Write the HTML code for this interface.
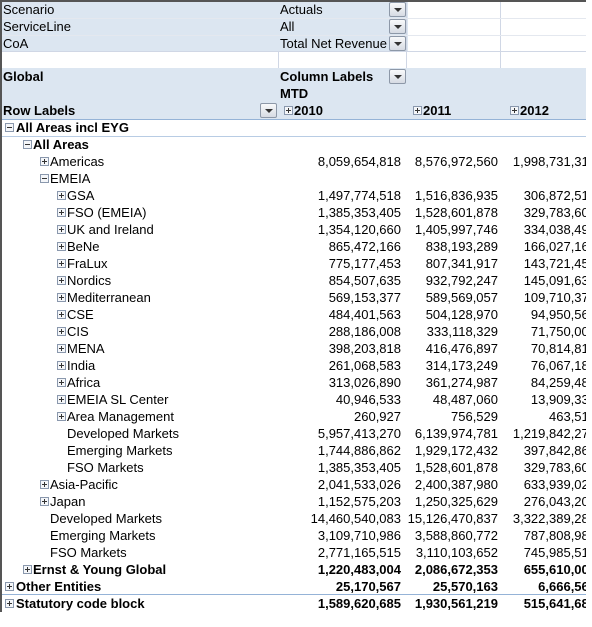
<!DOCTYPE html>
<html><head><meta charset="utf-8"><style>
*{margin:0;padding:0;box-sizing:border-box}
body{width:592px;height:627px;overflow:hidden;background:#fff;font-family:"Liberation Sans",Arial,sans-serif;font-size:13px;color:#000;position:relative}
.wrap{position:absolute;left:0;top:0;width:586px;height:612px;overflow:hidden;border-left:2px solid #555;border-top:2px solid #555}
.hd{position:absolute;left:0;width:100%;background:#dce6f1}
.r{position:absolute;left:0;width:100%;height:17px;line-height:17px;white-space:nowrap}
.t{position:absolute;top:0}
.n{position:absolute;top:0;text-align:right}
.b{font-weight:bold}
.bx{position:absolute;top:4px;width:9px;height:9px;border:1px solid #8a98ad;background:#f4f6f9}
.bx:before{content:"";position:absolute;left:1px;top:3px;width:5px;height:1px;background:#333}
.p:after{content:"";position:absolute;left:3px;top:1px;width:1px;height:5px;background:#333}
.dd{position:absolute;width:17px;height:15px;border:1px solid #8d98a8;background:linear-gradient(#f8f9fb,#d6dbe3);border-radius:2px}
.dd:after{content:"";position:absolute;left:4px;top:5px;border-left:4px solid transparent;border-right:4px solid transparent;border-top:4px solid #333}
.vl{position:absolute;width:1px;background:#d0d7e5}
.hl{position:absolute;left:0;width:100%;height:1px;background:#95b3d7}
</style></head><body>
<div class="wrap">
<div class="hd" style="top:0;height:49px;width:406px"></div>
<div class="hd" style="top:66px;height:51px"></div>
<div class="vl" style="left:404px;top:0;height:66px"></div>
<div class="vl" style="left:498px;top:0;height:66px"></div>
<div class="vl" style="left:276px;top:49px;height:17px"></div>
<div style="position:absolute;left:0;top:16px;width:100%;height:1px;background:#e4e8ef"></div>
<div style="position:absolute;left:0;top:33px;width:100%;height:1px;background:#e4e8ef"></div>
<div style="position:absolute;left:0;top:49px;width:100%;height:1px;background:#d0d7e5"></div>
<div class="r" style="top:-1px"><span class="t" style="left:1px">Scenario</span><span class="t" style="left:278px">Actuals</span></div>
<div class="r" style="top:16px"><span class="t" style="left:1px">ServiceLine</span><span class="t" style="left:278px">All</span></div>
<div class="r" style="top:33px"><span class="t" style="left:1px">CoA</span><span class="t" style="left:278px">Total Net Revenue</span></div>
<div class="dd" style="left:387px;top:0"></div>
<div class="dd" style="left:387px;top:17px"></div>
<div class="dd" style="left:387px;top:34px"></div>
<div class="r b" style="top:66px"><span class="t" style="left:1px">Global</span><span class="t" style="left:278px">Column Labels</span></div>
<div class="dd" style="left:387px;top:67px"></div>
<div class="r b" style="top:83px"><span class="t" style="left:278px">MTD</span></div>
<div class="r b" style="top:100px"><span class="t" style="left:1px">Row Labels</span>
<span class="bx p" style="left:282px"></span><span class="t" style="left:292px">2010</span>
<span class="bx p" style="left:411px"></span><span class="t" style="left:421px">2011</span>
<span class="bx p" style="left:508px"></span><span class="t" style="left:518px">2012</span></div>
<div class="dd" style="left:258px;top:101px"></div>
<div class="hl" style="top:117px"></div>
<div class="hl" style="top:134px;background:#b8cce4"></div>
<div class="hl" style="top:592px"></div>

<div class="r b" style="top:117px"><span class="bx" style="left:3px"></span><span class="t" style="left:14px">All Areas incl EYG</span></div>
<div class="r b" style="top:134px"><span class="bx" style="left:21px"></span><span class="t" style="left:31px">All Areas</span></div>
<div class="r" style="top:151px"><span class="bx p" style="left:38px"></span><span class="t" style="left:48px">Americas</span><span class="n" style="right:185px">8,059,654,818</span><span class="n" style="right:88px">8,576,972,560</span><span class="n" style="right:-10px">1,998,731,318</span></div>
<div class="r" style="top:168px"><span class="bx" style="left:38px"></span><span class="t" style="left:48px">EMEIA</span></div>
<div class="r" style="top:185px"><span class="bx p" style="left:55px"></span><span class="t" style="left:65px">GSA</span><span class="n" style="right:185px">1,497,774,518</span><span class="n" style="right:88px">1,516,836,935</span><span class="n" style="right:-10px">306,872,518</span></div>
<div class="r" style="top:202px"><span class="bx p" style="left:55px"></span><span class="t" style="left:65px">FSO (EMEIA)</span><span class="n" style="right:185px">1,385,353,405</span><span class="n" style="right:88px">1,528,601,878</span><span class="n" style="right:-10px">329,783,605</span></div>
<div class="r" style="top:219px"><span class="bx p" style="left:55px"></span><span class="t" style="left:65px">UK and Ireland</span><span class="n" style="right:185px">1,354,120,660</span><span class="n" style="right:88px">1,405,997,746</span><span class="n" style="right:-10px">334,038,498</span></div>
<div class="r" style="top:236px"><span class="bx p" style="left:55px"></span><span class="t" style="left:65px">BeNe</span><span class="n" style="right:185px">865,472,166</span><span class="n" style="right:88px">838,193,289</span><span class="n" style="right:-10px">166,027,166</span></div>
<div class="r" style="top:253px"><span class="bx p" style="left:55px"></span><span class="t" style="left:65px">FraLux</span><span class="n" style="right:185px">775,177,453</span><span class="n" style="right:88px">807,341,917</span><span class="n" style="right:-10px">143,721,453</span></div>
<div class="r" style="top:270px"><span class="bx p" style="left:55px"></span><span class="t" style="left:65px">Nordics</span><span class="n" style="right:185px">854,507,635</span><span class="n" style="right:88px">932,792,247</span><span class="n" style="right:-10px">145,091,635</span></div>
<div class="r" style="top:287px"><span class="bx p" style="left:55px"></span><span class="t" style="left:65px">Mediterranean</span><span class="n" style="right:185px">569,153,377</span><span class="n" style="right:88px">589,569,057</span><span class="n" style="right:-10px">109,710,377</span></div>
<div class="r" style="top:304px"><span class="bx p" style="left:55px"></span><span class="t" style="left:65px">CSE</span><span class="n" style="right:185px">484,401,563</span><span class="n" style="right:88px">504,128,970</span><span class="n" style="right:-10px">94,950,563</span></div>
<div class="r" style="top:321px"><span class="bx p" style="left:55px"></span><span class="t" style="left:65px">CIS</span><span class="n" style="right:185px">288,186,008</span><span class="n" style="right:88px">333,118,329</span><span class="n" style="right:-10px">71,750,008</span></div>
<div class="r" style="top:338px"><span class="bx p" style="left:55px"></span><span class="t" style="left:65px">MENA</span><span class="n" style="right:185px">398,203,818</span><span class="n" style="right:88px">416,476,897</span><span class="n" style="right:-10px">70,814,818</span></div>
<div class="r" style="top:355px"><span class="bx p" style="left:55px"></span><span class="t" style="left:65px">India</span><span class="n" style="right:185px">261,068,583</span><span class="n" style="right:88px">314,173,249</span><span class="n" style="right:-10px">76,067,183</span></div>
<div class="r" style="top:372px"><span class="bx p" style="left:55px"></span><span class="t" style="left:65px">Africa</span><span class="n" style="right:185px">313,026,890</span><span class="n" style="right:88px">361,274,987</span><span class="n" style="right:-10px">84,259,480</span></div>
<div class="r" style="top:389px"><span class="bx p" style="left:55px"></span><span class="t" style="left:65px">EMEIA SL Center</span><span class="n" style="right:185px">40,946,533</span><span class="n" style="right:88px">48,487,060</span><span class="n" style="right:-10px">13,909,333</span></div>
<div class="r" style="top:406px"><span class="bx p" style="left:55px"></span><span class="t" style="left:65px">Area Management</span><span class="n" style="right:185px">260,927</span><span class="n" style="right:88px">756,529</span><span class="n" style="right:-10px">463,512</span></div>
<div class="r" style="top:423px"><span class="t" style="left:65px">Developed Markets</span><span class="n" style="right:185px">5,957,413,270</span><span class="n" style="right:88px">6,139,974,781</span><span class="n" style="right:-10px">1,219,842,270</span></div>
<div class="r" style="top:440px"><span class="t" style="left:65px">Emerging Markets</span><span class="n" style="right:185px">1,744,886,862</span><span class="n" style="right:88px">1,929,172,432</span><span class="n" style="right:-10px">397,842,862</span></div>
<div class="r" style="top:457px"><span class="t" style="left:65px">FSO Markets</span><span class="n" style="right:185px">1,385,353,405</span><span class="n" style="right:88px">1,528,601,878</span><span class="n" style="right:-10px">329,783,605</span></div>
<div class="r" style="top:474px"><span class="bx p" style="left:38px"></span><span class="t" style="left:48px">Asia-Pacific</span><span class="n" style="right:185px">2,041,533,026</span><span class="n" style="right:88px">2,400,387,980</span><span class="n" style="right:-10px">633,939,026</span></div>
<div class="r" style="top:491px"><span class="bx p" style="left:38px"></span><span class="t" style="left:48px">Japan</span><span class="n" style="right:185px">1,152,575,203</span><span class="n" style="right:88px">1,250,325,629</span><span class="n" style="right:-10px">276,043,203</span></div>
<div class="r" style="top:508px"><span class="t" style="left:48px">Developed Markets</span><span class="n" style="right:185px">14,460,540,083</span><span class="n" style="right:88px">15,126,470,837</span><span class="n" style="right:-10px">3,322,389,283</span></div>
<div class="r" style="top:525px"><span class="t" style="left:48px">Emerging Markets</span><span class="n" style="right:185px">3,109,710,986</span><span class="n" style="right:88px">3,588,860,772</span><span class="n" style="right:-10px">787,808,986</span></div>
<div class="r" style="top:542px"><span class="t" style="left:48px">FSO Markets</span><span class="n" style="right:185px">2,771,165,515</span><span class="n" style="right:88px">3,110,103,652</span><span class="n" style="right:-10px">745,985,515</span></div>
<div class="r b" style="top:559px"><span class="bx p" style="left:21px"></span><span class="t" style="left:31px">Ernst &amp; Young Global</span><span class="n" style="right:185px">1,220,483,004</span><span class="n" style="right:88px">2,086,672,353</span><span class="n" style="right:-10px">655,610,004</span></div>
<div class="r b" style="top:576px"><span class="bx p" style="left:3px"></span><span class="t" style="left:14px">Other Entities</span><span class="n" style="right:185px">25,170,567</span><span class="n" style="right:88px">25,570,163</span><span class="n" style="right:-10px">6,666,567</span></div>
<div class="r b" style="top:593px"><span class="bx p" style="left:3px"></span><span class="t" style="left:14px">Statutory code block</span><span class="n" style="right:185px">1,589,620,685</span><span class="n" style="right:88px">1,930,561,219</span><span class="n" style="right:-10px">515,641,685</span></div>
</div>
</body></html>
